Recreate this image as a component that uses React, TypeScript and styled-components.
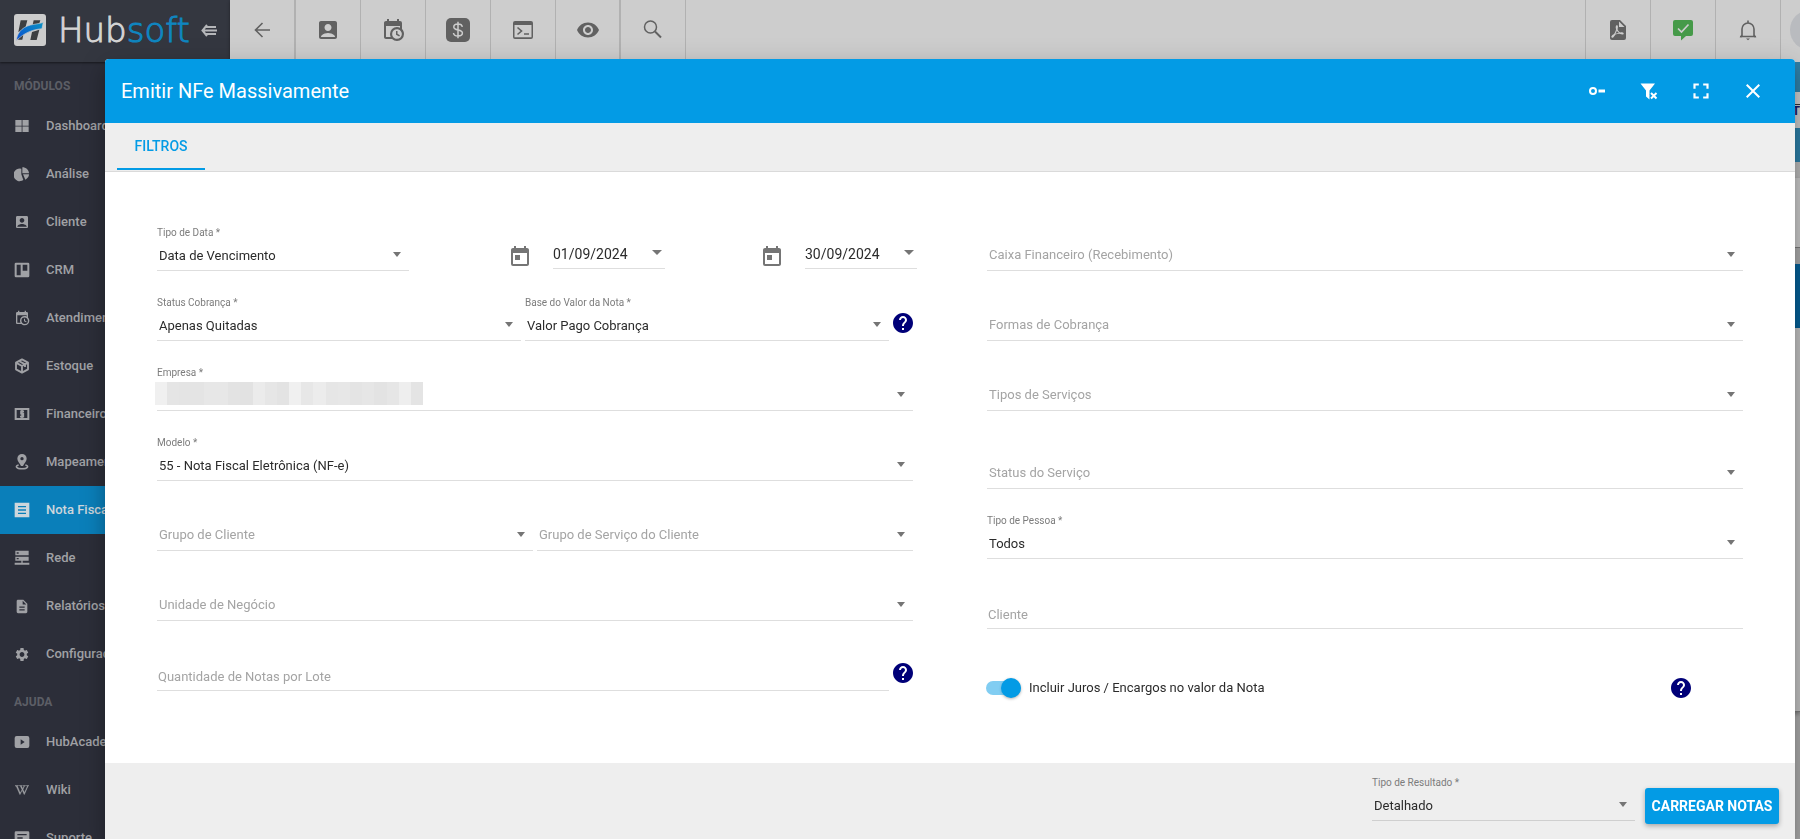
import React from "react";
import styled, { createGlobalStyle } from "styled-components";
import {
  MdAccountBox,
  MdClose,
  MdDescription,
  MdFullscreen,
  MdHelp,
  MdSettings,
  MdToday,
  MdVisibility,
} from "react-icons/md";
import { FaWikipediaW } from "react-icons/fa";

const blue = "#039be5";
const lineColor = "#dedede";

const GlobalStyle = createGlobalStyle`
  *, *::before, *::after { box-sizing: border-box; }
  html, body { margin: 0; height: 100%; overflow: hidden; }
  body {
    background: #a6a6a6;
    font-family: Roboto, "Liberation Sans", sans-serif;
    font-size: 13px;
    color: #2b2b2b;
  }
  button, input, select { font-family: inherit; }
`;

/* ---------- Application shell ---------- */

const Shell = styled.div`
  display: flex;
  height: 100vh;
  overflow: hidden;
`;

const Sidebar = styled.aside`
  flex: 0 0 230px;
  background: #2c2e39;
  color: #a0a1a5;
  overflow: hidden;
`;

const SidebarHeader = styled.div`
  display: flex;
  align-items: center;
  height: 62px;
  padding: 0 12px 2px 14px;
  background: #343740;
  box-shadow: 0 1px 2px rgba(0, 0, 0, 0.5);
`;

const Wordmark = styled.span`
  flex: 1;
  margin-left: 12px;
  font-family: "DejaVu Sans", sans-serif;
  font-weight: 200;
  font-size: 34px;
  line-height: 34px;
  color: #d4d4d4;
  -webkit-text-stroke: 1px currentColor;
`;

const WordmarkAccent = styled.span`
  color: #0f86c0;
`;

const PlainButton = styled.button`
  display: flex;
  align-items: center;
  justify-content: center;
  padding: 0;
  border: 0;
  background: none;
  color: inherit;
`;

const SectionTitle = styled.h2`
  margin: 0;
  padding: 8px 14px 0;
  height: 40px;
  font-size: 12px;
  line-height: 32px;
  font-weight: 700;
  color: #5c5e66;
`;

const Menu = styled.ul`
  margin: 0;
  padding: 0;
  list-style: none;
`;

const MenuLink = styled.a<{ $active?: boolean }>`
  display: flex;
  align-items: center;
  gap: 16px;
  height: 48px;
  padding: 0 0 2px 14px;
  font-weight: 500;
  font-size: 13px;
  text-decoration: none;
  white-space: nowrap;
  color: ${(p) => (p.$active ? "#cdd6dc" : "#a0a1a5")};
  background: ${(p) => (p.$active ? "#0a7fba" : "transparent")};
`;

const MenuIcon = styled.span`
  display: flex;
  align-items: center;
  justify-content: center;
  width: 16px;
  height: 18px;
  padding-top: 2px;
`;

const Main = styled.main`
  flex: 1;
  min-width: 0;
  display: flex;
  flex-direction: column;
`;

const Toolbar = styled.header`
  display: flex;
  flex: 0 0 62px;
  background: #cdcdcd;
  color: #616161;
  box-shadow: 0 1px 3px rgba(0, 0, 0, 0.4);
`;

const ToolButton = styled(PlainButton)<{ $first?: boolean; $groupEnd?: boolean }>`
  flex: 0 0 65px;
  padding-bottom: 2px;
  border-left: ${(p) => (p.$first ? "0" : "1px solid #b1b1b1")};
  border-right: ${(p) => (p.$groupEnd ? "1px solid #b1b1b1" : "0")};
`;

const ToolSpacer = styled.div`
  flex: 1;
  border-left: 1px solid #b1b1b1;
`;

const AvatarCell = styled.div`
  display: flex;
  align-items: center;
  flex: 0 0 20px;
  padding: 0 0 2px 9px;
  border-left: 1px solid #b1b1b1;
  overflow: hidden;
`;

const Avatar = styled.div`
  flex: 0 0 40px;
  height: 40px;
  border-radius: 50%;
  background: #b9bbbf;
`;

const Band = styled.div<{ $height: number; $color: string }>`
  flex: 0 0 ${(p) => p.$height}px;
  background: ${(p) => p.$color};
`;

const ColumnBand = styled(Band)`
  border-top: 1px solid #333;
  text-align: right;
  font-size: 13px;
  line-height: 11px;
  font-weight: 700;
  color: #1a1a66;
`;

const CardBand = styled(Band)`
  border-bottom: 1px solid #777;
  box-shadow: 0 2px 4px rgba(0, 0, 0, 0.3);
`;

/* ---------- Dialog ---------- */

const DialogLayer = styled.div`
  position: fixed;
  inset: 0;
  display: flex;
  padding: 59px 5px 0 105px;
`;

const Dialog = styled.section`
  flex: 1;
  min-width: 0;
  display: flex;
  flex-direction: column;
  border-radius: 4px 4px 0 0;
  background: #fff;
  box-shadow: 0 7px 8px -4px rgba(0, 0, 0, 0.2), 0 13px 19px 2px rgba(0, 0, 0, 0.14),
    0 5px 24px 4px rgba(0, 0, 0, 0.12);
  overflow: hidden;
`;

const DialogHeader = styled.header`
  display: flex;
  align-items: center;
  flex: 0 0 64px;
  gap: 12px;
  padding: 0 22px 0 16px;
  background: ${blue};
  color: #fff;
`;

const DialogTitle = styled.h1`
  flex: 1;
  margin: 0;
  font-size: 20px;
  line-height: 24px;
  font-weight: 400;
`;

const HeaderButton = styled(PlainButton)`
  width: 40px;
  height: 40px;
`;

const Tabs = styled.nav`
  flex: 0 0 49px;
  display: flex;
  padding: 0 12px 1px;
  background: #eeeeee;
  border-bottom: 1px solid #dadada;
`;

const Tab = styled.button`
  min-width: 88px;
  padding: 0 16px;
  border: 0;
  border-bottom: 2px solid ${blue};
  background: none;
  color: ${blue};
  font-size: 14px;
  font-weight: 500;
`;

const FormBody = styled.form`
  flex: 1;
  display: grid;
  grid-template-columns: 1fr 1fr;
  column-gap: 74px;
  align-items: start;
  padding: 29px 52px 0;
`;

const Column = styled.div`
  display: flex;
  flex-direction: column;
  min-width: 0;
`;

const Row = styled.div<{ $spaced?: boolean }>`
  display: flex;
  align-items: flex-end;
  gap: 4px;
  height: 70px;
  margin-top: ${(p) => (p.$spaced ? "8px" : "0")};
`;

const Thirds = styled.div`
  display: grid;
  grid-template-columns: repeat(3, 1fr);
  align-items: end;
  height: 70px;
`;

const FieldBox = styled.div`
  flex: 1;
  min-width: 0;
`;

const FieldLabel = styled.label`
  display: block;
  font-size: 10px;
  line-height: 16px;
  color: #7c7c7c;
`;

const ControlCell = styled.div`
  display: grid;
  align-items: center;

  & > * {
    grid-area: 1 / 1;
  }
`;

const Select = styled.select<{ $placeholder?: boolean }>`
  appearance: none;
  width: 100%;
  height: 30px;
  padding: 0 26px ${(p) => (p.$placeholder ? "2px" : "0")} 2px;
  border: 0;
  border-bottom: 1px solid ${lineColor};
  border-radius: 0;
  background: none;
  font-size: 13px;
  color: ${(p) => (p.$placeholder ? "#a4a4a4" : "#2b2b2b")};
  opacity: 1;
`;

const Caret = styled.span<{ $large?: boolean }>`
  justify-self: end;
  margin: 0 ${(p) => (p.$large ? "3px" : "8px")} 3px 0;
  border: ${(p) => (p.$large ? "5px" : "4px")} solid transparent;
  border-top: 5px solid #757575;
  border-bottom: 0;
  pointer-events: none;
`;

const TextInput = styled.input`
  width: 100%;
  height: 28px;
  padding: 0 1px;
  border: 0;
  border-bottom: 1px solid ${lineColor};
  background: none;
  font-size: 13px;
  color: #2b2b2b;

  &::placeholder {
    color: #a4a4a4;
    opacity: 1;
  }
`;

const HelpButton = styled(PlainButton)`
  flex: 0 0 24px;
  height: 24px;
  margin: 0 -2px 6px;
  color: #000078;
`;

const DateGroup = styled.div`
  display: flex;
  align-items: flex-end;
  justify-content: flex-end;
  gap: 21px;
  height: 30px;
  margin-right: -4px;
  padding-bottom: 2px;
  color: #757575;
`;

const DateCell = styled(ControlCell)`
  width: 112px;
`;

const DateInput = styled(TextInput)`
  height: 30px;
  padding: 0;
  font-size: 14px;
`;

const Mosaic = styled.div`
  display: flex;
  justify-self: start;
  width: 268px;
  margin: 0 0 6px -2px;
`;

const MosaicTile = styled.span<{ $shade: string }>`
  flex: 1;
  height: 23px;
  background: ${(p) => p.$shade};
`;

const SwitchRow = styled(Row)`
  align-items: center;
  height: 118px;
  gap: 0;
  padding-right: 52px;

  ${HelpButton} {
    margin-bottom: 0;
  }
`;

const SwitchLabel = styled.label`
  flex: 1;
  display: flex;
  align-items: center;
  gap: 8px;
  margin-left: -1px;
  font-size: 13px;
`;

const SwitchText = styled.span`
  padding-bottom: 2px;
`;

const Switch = styled.input`
  appearance: none;
  display: grid;
  align-items: center;
  width: 35px;
  height: 20px;
  margin: 0;

  &::before,
  &::after {
    content: "";
    grid-area: 1 / 1;
    background: ${blue};
  }

  &::before {
    height: 14px;
    border-radius: 7px;
    opacity: 0.5;
  }

  &::after {
    justify-self: end;
    width: 20px;
    height: 20px;
    border-radius: 50%;
    box-shadow: 0 1px 3px rgba(0, 0, 0, 0.3);
  }
`;

const DialogFooter = styled.footer`
  flex: 0 0 76px;
  display: flex;
  align-items: flex-end;
  justify-content: flex-end;
  gap: 10px;
  padding: 0 16px 15px;
  background: #eeeeee;
`;

const ResultField = styled.div`
  width: 263px;
  margin-bottom: 3px;

  select {
    border-bottom-color: #cfcfcf;
  }
`;

const PrimaryButton = styled.button`
  min-width: 134px;
  height: 36px;
  padding: 0 6px 1px;
  border: 0;
  border-radius: 3px;
  background: ${blue};
  box-shadow: 0 2px 5px rgba(0, 0, 0, 0.3);
  color: #fff;
  font-size: 14px;
  font-weight: 700;
  white-space: nowrap;
`;

/* ---------- Icons ---------- */

const Svg = ({
  size = 24,
  box = "0 0 24 24",
  children,
}: {
  size?: number;
  box?: string;
  children: React.ReactNode;
}) => (
  <svg width={size} height={size} viewBox={box} fill="currentColor" aria-hidden="true">
    {children}
  </svg>
);

const BrandMark = () => (
  <svg width="32" height="32" viewBox="0 0 96 96" aria-hidden="true">
    <defs>
      <linearGradient id="swoosh" x1="0" y1="1" x2="1" y2="0">
        <stop offset="0" stopColor="#0b4fd0" />
        <stop offset="1" stopColor="#0a93c4" />
      </linearGradient>
    </defs>
    <rect width="96" height="96" rx="9" fill="#cccccc" />
    <path d="M20 19h20l-7 27-20 8zM59 19h20l-4 12-20 5zM15 66l14-8-4 19H12zM54 54l22-7-8 31H49z" fill="#3d3f41" />
    <path d="M7 80C10 50 32 35 60 31c12-2 20-3 28-6-2 8-3 13-4 19-27 3-51 10-77 36z" fill="url(#swoosh)" stroke="#cccccc" strokeWidth="2" />
  </svg>
);

const CollapseIcon = () => (
  <svg width="17" height="13" viewBox="0 0 17 13" fill="none" stroke="#b5b6b9" aria-hidden="true">
    <path d="M6 1 1.500 6.500 6 12M3 6.500h13M5 3h10M5 10h10" strokeWidth="2" />
  </svg>
);

const calendarClockPath =
  "M15,13H16.5V15.82L18.94,17.23L18.19,18.53L15,16.69V13M19,8H5V19H9.67C9.24,18.09 9,17.07 9,16A7,7 0 0,1 16,9C17.07,9 18.09,9.24 19,9.67V8M5,21C3.89,21 3,20.1 3,19V5C3,3.89 3.89,3 5,3H6V1H8V3H16V1H18V3H19A2,2 0 0,1 21,5V11.1C22.24,12.36 23,14.09 23,16A7,7 0 0,1 16,23C14.09,23 12.36,22.24 11.1,21H5M16,11.15A4.85,4.85 0 0,0 11.15,16C11.15,18.68 13.32,20.85 16,20.85A4.85,4.85 0 0,0 20.85,16C20.85,13.32 18.68,11.15 16,11.15Z";

const CalendarClock = ({ size = 24 }: { size?: number }) => (
  <Svg size={size}>
    <path d={calendarClockPath} />
  </Svg>
);

const BackIcon = () => (
  <Svg>
    <path d="M20 12H6M12.500 5l-7 7 7 7" fill="none" stroke="currentColor" strokeWidth="1.600" />
  </Svg>
);

const DollarIcon = () => (
  <Svg>
    <rect width="24" height="24" rx="5" />
    <path
      d="M16.300 8.800C16 7 14.300 6 12 6S7.800 7 7.800 9c0 4.200 8.600 1.900 8.600 6 0 2-1.900 3-4.400 3s-4.300-1-4.500-3M12 3.800v16.400"
      fill="none"
      stroke="#cdcdcd"
      strokeWidth="1.500"
    />
  </Svg>
);

const ConsoleIcon = () => (
  <Svg>
    <path
      fillRule="evenodd"
      d="M4 3h16a2 2 0 0 1 2 2v14a2 2 0 0 1-2 2H4a2 2 0 0 1-2-2V5a2 2 0 0 1 2-2zM3.500 7v12.300h17V7z"
    />
    <path d="m6.500 9.500 4 3.500-4 3.500M13 16h5" fill="none" stroke="currentColor" strokeWidth="1.600" />
  </Svg>
);

const SearchIcon = () => (
  <Svg>
    <circle cx="9.500" cy="9" r="6" fill="none" stroke="currentColor" strokeWidth="1.500" />
    <path d="m14 13.500 6 6" fill="none" stroke="currentColor" strokeWidth="2" />
  </Svg>
);

const PdfIcon = () => (
  <Svg box="1 0 24 24">
    <path d="M14,9H19.5L14,3.5V9M7,2H15L21,8V20A2,2 0 0,1 19,22H7C5.89,22 5,21.1 5,20V4A2,2 0 0,1 7,2M11.93,12.44C12.34,13.34 12.86,14.08 13.46,14.59L13.87,14.91C13,15.07 11.8,15.35 10.53,15.84V15.84L10.42,15.88L10.92,14.84C11.37,13.97 11.7,13.18 11.93,12.44M18.41,16.25C18.59,16.07 18.68,15.84 18.69,15.59C18.72,15.39 18.67,15.2 18.57,15.04C18.28,14.57 17.53,14.35 16.29,14.35L15,14.42L14.13,13.84C13.5,13.32 12.93,12.41 12.53,11.28L12.57,11.14C12.9,9.81 13.21,8.2 12.55,7.54C12.39,7.38 12.17,7.3 11.94,7.3H11.7C11.33,7.3 11,7.69 10.91,8.07C10.54,9.4 10.76,10.13 11.13,11.34V11.35C10.88,12.23 10.56,13.25 10.05,14.28L9.09,16.08L8.2,16.57C7,17.32 6.43,18.16 6.32,18.69C6.28,18.88 6.3,19.05 6.37,19.23L6.4,19.28L6.88,19.59L7.32,19.7C8.13,19.7 9.05,18.75 10.29,16.63L10.47,16.56C11.5,16.23 12.78,16 14.5,15.81C15.53,16.32 16.74,16.55 17.5,16.55C17.94,16.55 18.24,16.44 18.41,16.25Z" />
  </Svg>
);

const MessageCheckIcon = () => (
  <Svg>
    <path d="M4 2h16a2 2 0 0 1 2 2v12a2 2 0 0 1-2 2h-5l-5 4.500V18H4a2 2 0 0 1-2-2V4a2 2 0 0 1 2-2z" fill="#469a49" />
    <path d="m7 10.500 3.500 3.500 7-7.500" fill="none" stroke="#cdcdcd" strokeWidth="1.700" />
  </Svg>
);

const BellIcon = () => (
  <Svg>
    <path
      d="M4 18.500h16M6 18V11a6 6 0 0 1 12 0v7M12 4.800V2.500"
      fill="none"
      stroke="currentColor"
      strokeWidth="1.600"
    />
    <path d="M10 20.500h4l-2 1.800zM3.500 19.300 6 16.500v2.800zM20.500 19.300 18 16.500v2.800z" />
  </Svg>
);

const KeyIcon = () => (
  <Svg>
    <circle cx="8" cy="12" r="3" fill="none" stroke="currentColor" strokeWidth="2" />
    <path d="M13.500 10.500h6.500v3h-6.500z" />
  </Svg>
);

const FilterRemoveIcon = () => (
  <Svg>
    <path d="M3.500 4.500H18L12.500 11.500v9l-3.500-3v-6z" />
    <path d="m14 14 5.500 5.500m0-5.500L14 19.500" fill="none" stroke={blue} strokeWidth="4" />
    <path d="m14 14 5.500 5.500m0-5.500L14 19.500" fill="none" stroke="currentColor" strokeWidth="2" />
  </Svg>
);

const menuIcons: Record<string, React.ReactNode> = {
  dashboard: (
    <Svg size={16}>
      <path d="M2 3h9.500v8.500H2zM12.700 3h9.300v8.500h-9.300zM2 12.700h9.500V21H2zM12.700 12.700h9.300V21h-9.300z" />
    </Svg>
  ),
  pie: (
    <Svg size={16}>
      <path d="M11 4v8.500l3 8.600A9.500 9.500 0 1 1 11 4zM12.500 2c5.500 0 10 4 10 9h-10zM13.500 12.500h9c0 3.500-2 6-5.500 8z" />
    </Svg>
  ),
  client: <MdAccountBox size={18} />,
  board: (
    <Svg size={16}>
      <path
        fillRule="evenodd"
        d="M3 1h18a2 2 0 0 1 2 2v18a2 2 0 0 1-2 2H3a2 2 0 0 1-2-2V3a2 2 0 0 1 2-2zm1 3v16h6V4zm9 0v9h7V4z"
      />
    </Svg>
  ),
  calendar: <CalendarClock size={16} />,
  box: (
    <Svg size={16}>
      <path
        d="m12 2 9 5v10l-9 5-9-5V7zM3 7l9 5 9-5M12 12v10M7.500 4.500l9 5v4"
        fill="none"
        stroke="currentColor"
        strokeWidth="2.800"
        strokeLinejoin="round"
      />
    </Svg>
  ),
  money: (
    <Svg size={16}>
      <path d="M1 3h22v18H1zM4 6v12h16V6z" fillRule="evenodd" />
      <path d="M15 8h-4.500v3.500h3.500V16H9M12 6v12" fill="none" stroke="currentColor" strokeWidth="2.400" />
    </Svg>
  ),
  map: (
    <Svg size={16}>
      <path
        fillRule="evenodd"
        d="M12 0a7 7 0 0 1 7 7c0 4-3.500 6.500-5.500 11h-3C8.500 13.500 5 11 5 7a7 7 0 0 1 7-7zm0 4.500a2.500 2.500 0 1 0 0 5 2.500 2.500 0 0 0 0-5z"
      />
      <path d="M7 16.500c-6 1.500-4 5.700 5 5.700s11-4.200 5-5.700" fill="none" stroke="currentColor" strokeWidth="2.300" />
    </Svg>
  ),
  invoice: (
    <Svg size={16}>
      <path fillRule="evenodd" d="M1 1h22v22H1zM6 6v2h12V6zm0 5v2h12v-2zm0 5v2h12v-2z" />
    </Svg>
  ),
  server: (
    <Svg size={16}>
      <path
        fillRule="evenodd"
        d="M2 1h20v7H2zm0 9h20v6h-9v3h10v3H1v-3h10v-3H2zM4 3.500v2h3v-2zM4 12v2h3v-2z"
      />
    </Svg>
  ),
  report: <MdDescription size={17} />,
  cog: <MdSettings size={17} />,
  video: (
    <Svg size={16}>
      <path
        fillRule="evenodd"
        d="M4 3h16a3 3 0 0 1 3 3v12a3 3 0 0 1-3 3H4a3 3 0 0 1-3-3V6a3 3 0 0 1 3-3zm6 5v8l6-4z"
      />
    </Svg>
  ),
  wiki: <FaWikipediaW size={14} stroke="currentColor" strokeWidth={16} />,
  support: (
    <Svg size={16}>
      <path
        fillRule="evenodd"
        d="M3 2h18a2 2 0 0 1 2 2v16a2 2 0 0 1-2 2H3a2 2 0 0 1-2-2V4a2 2 0 0 1 2-2zm2 4v2h14V6zm0 5v2h8v-2z"
      />
    </Svg>
  ),
};

/* ---------- Data ---------- */

type MenuEntry = { icon: string; label: string; active?: boolean };

const modules: MenuEntry[] = [
  { icon: "dashboard", label: "Dashboard" },
  { icon: "pie", label: "Análise" },
  { icon: "client", label: "Cliente" },
  { icon: "board", label: "CRM" },
  { icon: "calendar", label: "Atendimento" },
  { icon: "box", label: "Estoque" },
  { icon: "money", label: "Financeiro" },
  { icon: "map", label: "Mapeamento" },
  { icon: "invoice", label: "Nota Fiscal", active: true },
  { icon: "server", label: "Rede" },
  { icon: "report", label: "Relatórios" },
  { icon: "cog", label: "Configuração" },
];

const help: MenuEntry[] = [
  { icon: "video", label: "HubAcademy" },
  { icon: "wiki", label: "Wiki" },
  { icon: "support", label: "Suporte" },
];

const mosaicShades = [
  "#f0f0f0", "#e5e5e5", "#e4e4e4", "#e4e4e4", "#e7e7e7", "#e7e7e7", "#e3e3e3", "#e2e2e2",
  "#ebebeb", "#e6e6e6", "#e3e3e3", "#f0f0f0", "#e7e7e7", "#ececec", "#e6e6e6", "#e7e7e7",
  "#e4e4e4", "#e6e6e6", "#e3e3e3", "#e6e6e6", "#eeeeee", "#e4e4e4",
];

/* ---------- Composed parts ---------- */

const MenuList = ({ entries }: { entries: MenuEntry[] }) => (
  <Menu>
    {entries.map((e) => (
      <li key={e.label}>
        <MenuLink href="#" $active={e.active}>
          <MenuIcon>{menuIcons[e.icon]}</MenuIcon>
          {e.label}
        </MenuLink>
      </li>
    ))}
  </Menu>
);

type SelectFieldProps = { id: string; label?: string; value: string; children?: React.ReactNode };

const SelectField = ({ id, label, value, children }: SelectFieldProps) => (
  <FieldBox>
    {label && <FieldLabel htmlFor={id}>{label} *</FieldLabel>}
    <ControlCell>
      <Select id={id} $placeholder={!label} aria-label={label ? undefined : value}>
        <option>{value}</option>
      </Select>
      {children}
      <Caret />
    </ControlCell>
  </FieldBox>
);

const DateField = ({ value, label }: { value: string; label: string }) => (
  <DateGroup>
    <MdToday size={24} />
    <DateCell>
      <DateInput defaultValue={value} aria-label={label} />
      <Caret $large />
    </DateCell>
  </DateGroup>
);

const Help = () => (
  <HelpButton type="button" aria-label="Ajuda">
    <MdHelp size={24} />
  </HelpButton>
);

export default function App() {
  return (
    <>
      <GlobalStyle />
      <Shell>
        <Sidebar>
          <SidebarHeader>
            <BrandMark />
            <Wordmark>
              Hub<WordmarkAccent>soft</WordmarkAccent>
            </Wordmark>
            <PlainButton aria-label="Recolher menu">
              <CollapseIcon />
            </PlainButton>
          </SidebarHeader>
          <SectionTitle>MÓDULOS</SectionTitle>
          <MenuList entries={modules} />
          <SectionTitle>AJUDA</SectionTitle>
          <MenuList entries={help} />
        </Sidebar>
        <Main>
          <Toolbar>
            <ToolButton $first $groupEnd aria-label="Voltar"><BackIcon /></ToolButton>
            <ToolButton aria-label="Cliente"><MdAccountBox size={24} /></ToolButton>
            <ToolButton aria-label="Agenda"><CalendarClock /></ToolButton>
            <ToolButton aria-label="Financeiro"><DollarIcon /></ToolButton>
            <ToolButton aria-label="Console"><ConsoleIcon /></ToolButton>
            <ToolButton $groupEnd aria-label="Visualizar"><MdVisibility size={24} /></ToolButton>
            <ToolButton aria-label="Pesquisar"><SearchIcon /></ToolButton>
            <ToolSpacer />
            <ToolButton aria-label="PDF"><PdfIcon /></ToolButton>
            <ToolButton aria-label="Mensagens"><MessageCheckIcon /></ToolButton>
            <ToolButton aria-label="Notificações"><BellIcon /></ToolButton>
            <AvatarCell><Avatar /></AvatarCell>
          </Toolbar>
          <Band $height={30} $color="#2f7fa6" />
          <Band $height={12} $color="#c9c9c9" />
          <ColumnBand $height={24} $color="#c4c4c4">T</ColumnBand>
          <Band $height={34} $color="#2b7ba3" />
          <Band $height={16} $color="#b4b4b4" />
          <CardBand $height={70} $color="#c4c4c4" />
          <Band $height={16} $color="#a6a6a6" />
          <Band $height={64} $color="#055d93" />
          <CardBand $height={384} $color="#bdbdbd" />
        </Main>
      </Shell>

      <DialogLayer>
        <Dialog role="dialog" aria-labelledby="dialog-title">
          <DialogHeader>
            <DialogTitle id="dialog-title">Emitir NFe Massivamente</DialogTitle>
            <HeaderButton aria-label="Atalhos"><KeyIcon /></HeaderButton>
            <HeaderButton aria-label="Limpar filtros"><FilterRemoveIcon /></HeaderButton>
            <HeaderButton aria-label="Tela cheia"><MdFullscreen size={26} /></HeaderButton>
            <HeaderButton aria-label="Fechar"><MdClose size={24} /></HeaderButton>
          </DialogHeader>
          <Tabs>
            <Tab>FILTROS</Tab>
          </Tabs>
          <FormBody>
            <Column>
              <Thirds>
                <SelectField id="tipo-data" label="Tipo de Data" value="Data de Vencimento" />
                <DateField value="01/09/2024" label="Data inicial" />
                <DateField value="30/09/2024" label="Data final" />
              </Thirds>
              <Row>
                <SelectField id="status-cobranca" label="Status Cobrança" value="Apenas Quitadas" />
                <SelectField id="base-valor" label="Base do Valor da Nota" value="Valor Pago Cobrança" />
                <Help />
              </Row>
              <Row>
                <SelectField id="empresa" label="Empresa" value="">
                  <Mosaic>
                    {mosaicShades.map((shade, i) => (
                      <MosaicTile key={i} $shade={shade} />
                    ))}
                  </Mosaic>
                </SelectField>
              </Row>
              <Row>
                <SelectField id="modelo" label="Modelo" value="55 - Nota Fiscal Eletrônica (NF-e)" />
              </Row>
              <Row>
                <SelectField id="grupo-cliente" value="Grupo de Cliente" />
                <SelectField id="grupo-servico" value="Grupo de Serviço do Cliente" />
              </Row>
              <Row>
                <SelectField id="unidade" value="Unidade de Negócio" />
              </Row>
              <Row>
                <TextInput placeholder="Quantidade de Notas por Lote" aria-label="Quantidade de Notas por Lote" />
                <Help />
              </Row>
            </Column>
            <Column>
              <Row>
                <SelectField id="caixa" value="Caixa Financeiro (Recebimento)" />
              </Row>
              <Row>
                <SelectField id="formas" value="Formas de Cobrança" />
              </Row>
              <Row>
                <SelectField id="tipos-servicos" value="Tipos de Serviços" />
              </Row>
              <Row $spaced>
                <SelectField id="status-servico" value="Status do Serviço" />
              </Row>
              <Row>
                <SelectField id="tipo-pessoa" label="Tipo de Pessoa" value="Todos" />
              </Row>
              <Row>
                <TextInput placeholder="Cliente" aria-label="Cliente" />
              </Row>
              <SwitchRow>
                <SwitchLabel>
                  <Switch type="checkbox" role="switch" defaultChecked />
                  <SwitchText>Incluir Juros / Encargos no valor da Nota</SwitchText>
                </SwitchLabel>
                <Help />
              </SwitchRow>
            </Column>
          </FormBody>
          <DialogFooter>
            <ResultField>
              <SelectField id="tipo-resultado" label="Tipo de Resultado" value="Detalhado" />
            </ResultField>
            <PrimaryButton type="button">CARREGAR NOTAS</PrimaryButton>
          </DialogFooter>
        </Dialog>
      </DialogLayer>
    </>
  );
}
